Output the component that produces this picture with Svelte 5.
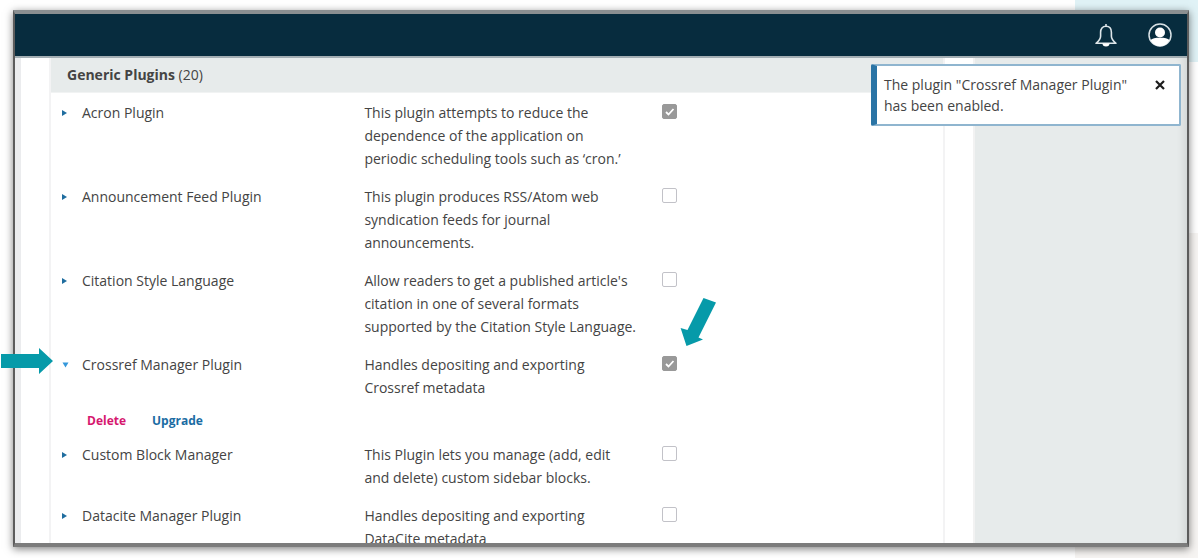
<script>
  let plugins = $state([
    { name: 'Acron Plugin', text: 'This plugin attempts to reduce the dependence of the application on periodic scheduling tools such as ‘cron.’', enabled: true, open: false },
    { name: 'Announcement Feed Plugin', text: 'This plugin produces RSS/Atom web syndication feeds for journal announcements.', enabled: false, open: false },
    { name: 'Citation Style Language', text: "Allow readers to get a published article's citation in one of several formats supported by the Citation Style Language.", enabled: false, open: false },
    { name: 'Crossref Manager Plugin', text: 'Handles depositing and exporting Crossref metadata', enabled: true, open: true },
    { name: 'Custom Block Manager', text: 'This Plugin lets you manage (add, edit and delete) custom sidebar blocks.', enabled: false, open: false },
    { name: 'Datacite Manager Plugin', text: 'Handles depositing and exporting DataCite metadata', enabled: false, open: false }
  ]);
  let notice = $state(true);
</script>

<div class="page">
  <div class="tint top"></div>
  <div class="tint bottom"></div>

  <div class="frame">
    <header>
      <button class="icon" aria-label="Notifications">
        <svg width="24" height="26" viewBox="0 0 24 26" fill="none" stroke="#dde5e9" stroke-width="1.6" stroke-linejoin="round">
          <path d="M12 2v2.200M12 4.200c-3.600 0-5.400 2.700-5.400 6v4.100c0 2.800-1.600 4.600-4.600 7h20c-3-2.400-4.600-4.200-4.600-7v-4.100c0-3.300-1.800-6-5.400-6z" />
          <path d="M8.500 21.500a3.500 3 0 0 0 7 0z" fill="#fff" stroke="none" />
        </svg>
      </button>
      <button class="icon" aria-label="Account">
        <svg width="24" height="24" viewBox="0 0 24 24">
          <circle cx="12" cy="12" r="11" fill="none" stroke="#d8e1e5" stroke-width="1.5" />
          <circle cx="12" cy="9.5" r="5" fill="#fff" />
          <path d="M2.500 17c2-1.600 4.500-2.200 9.500-2.200s7.500.6 9.500 2.200A11.200 11.200 0 0 1 12 23.200 11.200 11.200 0 0 1 2.500 17z" fill="#fff" />
        </svg>
      </button>
    </header>

    <div class="body">
      <main>
        <table>
          <thead>
            <tr><th colspan="3"><b>Generic Plugins</b> (20)</th></tr>
          </thead>
          <tbody>
            {#each plugins as p}
              <tr>
                <td>
                  <button class="name" aria-expanded={p.open} onclick={() => (p.open = !p.open)}>
                    <svg class:open={p.open} width="8" height="8" viewBox="0 0 8 8" aria-hidden="true">
                      {#if p.open}
                        <path d="M1.500 1.500h6L4.500 6.500z" />
                      {:else}
                        <path d="M1 1l5 3-5 3z" />
                      {/if}
                    </svg>
                    <span>{p.name}</span>
                  </button>
                </td>
                <td>{p.text}</td>
                <td><input type="checkbox" aria-label={p.name} bind:checked={p.enabled} /></td>
              </tr>
              {#if p.open}
                <tr class="actions">
                  <td colspan="3">
                    <div>
                      <button class="delete">Delete</button>
                      <button>Upgrade</button>
                    </div>
                  </td>
                </tr>
              {/if}
            {/each}
          </tbody>
        </table>
      </main>
      <aside></aside>
    </div>

    {#if notice}
      <div class="toast" role="status">
        <p>The plugin "Crossref Manager Plugin" has been enabled.</p>
        <button aria-label="Close" onclick={() => (notice = false)}>
          <svg width="10" height="10" viewBox="0 0 10 10" stroke="#1c1c1c" stroke-width="2.2"><path d="M1 1l8 8M9 1L1 9" /></svg>
        </button>
      </div>
    {/if}
  </div>

  <svg class="arrow right" width="52" height="26" viewBox="0 0 52 26" aria-hidden="true">
    <path d="M0 6h38V0l14 13-14 13v-6H0z" />
  </svg>
  <svg class="arrow down" width="38" height="50" viewBox="0 0 38 50" aria-hidden="true">
    <path d="M23.500 1L36 5.500 18.500 40.500l4.500 2L6.500 49 .6 31l6.900 2z" />
  </svg>
</div>

<style>
  :global(body) { margin: 0; background: #fff; }
  .page {
    position: relative;
    box-sizing: border-box;
    height: 100vh;
    padding: 10px 9px 11px 13px;
    overflow: hidden;
    font: 14px/23px "Open Sans", "Noto Sans", sans-serif;
    color: #444;
  }
  button { border: 0; padding: 0; background: none; font: inherit; color: inherit; cursor: pointer; }
  svg { display: block; }
  .tint { position: absolute; right: 0; width: 123px; }
  .top { top: 0; height: 62px; background: #e0f2f6; }
  .bottom { top: 233px; bottom: 0; background: #f6f4f2; }
  .frame {
    position: relative;
    box-sizing: border-box;
    height: 100%;
    display: flex;
    flex-direction: column;
    overflow: hidden;
    border: 2px solid #5c5c5c;
    border-top: 4px solid #8a8f91;
    border-bottom: 4px solid #7c7c7c;
    background: #fff;
    box-shadow: 0 2px 8px rgba(0, 0, 0, 0.5);
  }
  header {
    flex: none;
    display: flex;
    justify-content: flex-end;
    align-items: center;
    gap: 30px;
    box-sizing: border-box;
    height: 44px;
    padding-right: 15px;
    border-bottom: 2px solid #a3aeb3;
    background: #072c3e;
  }
  .body { flex: 1; min-height: 0; display: flex; overflow: hidden; border-left: 6px solid #ebecee; }
  main { flex: 1; padding: 0 28px; }
  aside {
    width: 18%;
    padding-left: 2px;
    border-left: 2px solid #f2f2f2;
    background: #e7ebeb;
    box-shadow: inset -8px 0 10px -6px rgba(0, 0, 0, 0.12);
  }
  table {
    width: 100%;
    table-layout: fixed;
    border-collapse: separate;
    border-spacing: 0;
    border: 2px solid #f3f3f4;
    border-width: 0 2px;
  }
  th { padding: 5px 16px 6px; text-align: left; font-weight: 400; background: #e7ebeb; border-bottom: 1px solid #f1f3f3; }
  b { font-weight: 700; }
  td { padding: 8px 8px 7px 16px; vertical-align: top; }
  td:first-child { padding-left: 10px; }
  .name { display: flex; align-items: center; gap: 13px; text-align: left; }
  .name svg { flex: none; fill: #1f6d9f; }
  .name svg.open { fill: #3498db; }
  input {
    appearance: none;
    display: block;
    box-sizing: border-box;
    width: 15px;
    height: 15px;
    margin: 3px 0 0;
    border: 1px solid #c2c2c8;
    border-radius: 2px;
    background: #fff;
  }
  input:checked {
    border-color: #999;
    background: #999 url("data:image/svg+xml,%3Csvg xmlns='http://www.w3.org/2000/svg' viewBox='0 0 13 13'%3E%3Cpath d='M3 7l2.500 2.500L10.500 4' fill='none' stroke='white' stroke-width='1.800'/%3E%3C/svg%3E");
  }
  .actions td:first-child { padding: 3px 0 3px 36px; }
  .actions div { display: flex; gap: 26px; }
  .actions button { font-size: 12px; font-weight: 700; line-height: 23px; color: #1b6ca3; }
  .actions .delete { color: #d6186f; }
  .toast {
    position: absolute;
    top: 50px;
    right: 6px;
    box-sizing: border-box;
    width: 310px;
    display: flex;
    align-items: flex-start;
    gap: 20px;
    padding: 8px 14px 8px 7px;
    border: 2px solid #8fb5cf;
    border-left: 6px solid #2a74a5;
    border-radius: 2px;
    background: #fff;
    line-height: 21px;
  }
  .toast p { flex: 1; margin: 0; }
  .toast button { margin-top: 6px; }
  .arrow { position: absolute; fill: #069aa9; }
  .right { left: 1px; top: 348px; }
  .down { left: 680px; top: 297px; }
</style>
